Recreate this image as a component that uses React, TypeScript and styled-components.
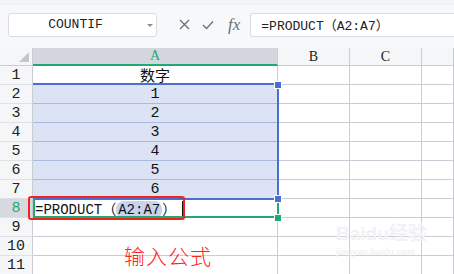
import { Fragment } from 'react';
import styled, { createGlobalStyle } from 'styled-components';

const GlobalStyle = createGlobalStyle`
  * { box-sizing: border-box; }
  body {
    margin: 0;
    background: #ffffff;
    font-family: "Liberation Mono", "Noto Sans CJK SC", monospace;
  }
`;

const GRID = '#c9cdd6';
const BLUE = '#4a6fd1';
const GREEN = '#1faa74';

const Page = styled.div`
  position: relative;
  width: 454px;
  height: 274px;
  overflow: hidden;
  background: #ffffff;
`;

const TopStrip = styled.div`
  height: 5px;
  background: #f3f4f6;
  border-bottom: 1px solid #eceef1;
`;

const Toolbar = styled.div`
  height: 43px;
  display: flex;
  align-items: center;
  padding: 0 0 4px 8px;
  background: #f7f8f9;
`;

const NameBox = styled.div`
  position: relative;
  width: 149px;
  height: 24px;
  display: flex;
  align-items: center;
  justify-content: center;
  padding-right: 14px;
  background: #ffffff;
  border: 1px solid #dadce1;
  border-radius: 3px;
  font-size: 13px;
  color: #222;
`;

const Caret = styled.span`
  position: absolute;
  right: 3px;
  top: 10px;
  border-left: 3px solid transparent;
  border-right: 3px solid transparent;
  border-top: 3px solid #8a8d93;
`;

const ToolIcons = styled.div`
  display: flex;
  align-items: center;
  gap: 12px;
  margin-left: 22px;
  color: #6b6e75;
`;

const Fx = styled.span`
  font-family: "Liberation Serif", serif;
  font-style: italic;
  font-size: 17px;
  color: #6b6e75;
  margin-left: 2px;
`;

const FormulaBox = styled.div`
  flex: 1;
  height: 24px;
  margin-left: 10px;
  display: flex;
  align-items: center;
  padding-left: 10px;
  background: #ffffff;
  border: 1px solid #dadce1;
  border-right: none;
  border-radius: 3px 0 0 3px;
  font-size: 13px;
  color: #222;
  white-space: nowrap;
`;

const Sheet = styled.div`
  position: relative;
  display: grid;
  grid-template-columns: 33px 245px 72px 72px 32px;
  grid-template-rows: 18px repeat(11, 19px);
`;

const Corner = styled.div`
  position: relative;
  background: #f5f6f8;
  border-right: 1px solid ${GRID};
  border-bottom: 1px solid ${GRID};
  &:after {
    content: '';
    position: absolute;
    right: 3px;
    bottom: 3px;
    border-left: 10px solid transparent;
    border-bottom: 10px solid #c3c6cc;
  }
`;

const ColHead = styled.div<{ $active?: boolean }>`
  display: flex;
  justify-content: center;
  align-items: center;
  background: ${({ $active }) => ($active ? '#d3d6dd' : '#f5f6f8')};
  color: ${({ $active }) => ($active ? GREEN : '#222')};
  border-right: 1px solid ${GRID};
  border-bottom: ${({ $active }) => ($active ? `2px solid ${GREEN}` : `1px solid ${GRID}`)};
  font-size: 14px;
  font-family: "Liberation Serif", serif;
`;

const RowHead = styled.div<{ $active?: boolean }>`
  display: flex;
  justify-content: center;
  align-items: center;
  background: ${({ $active }) => ($active ? '#d6d9df' : '#f5f6f8')};
  color: ${({ $active }) => ($active ? GREEN : '#222')};
  border-right: 1px solid ${GRID};
  border-bottom: 1px solid #dfe1e6;
  font-size: 15px;
`;

const Cell = styled.div<{ $sel?: boolean; $left?: boolean }>`
  display: flex;
  align-items: center;
  justify-content: ${({ $left }) => ($left ? 'flex-start' : 'center')};
  padding-left: ${({ $left }) => ($left ? '2px' : '0')};
  background: ${({ $sel }) => ($sel ? '#dce3f5' : '#ffffff')};
  border-right: 1px solid ${GRID};
  border-bottom: 1px solid ${({ $sel }) => ($sel ? '#a9b9e0' : GRID)};
  font-size: 15px;
  color: #111;
  white-space: nowrap;
  overflow: visible;
`;

const FormulaText = styled.span`
  font-size: 14px;
`;

const Ref = styled.span`
  background: #c9d3ee;
  border-radius: 8px;
  padding: 1px 2px;
`;

const Cursor = styled.span`
  display: inline-block;
  width: 1px;
  height: 15px;
  background: #111;
  margin-left: 6px;
  vertical-align: middle;
`;

const SelectionFrame = styled.div`
  position: absolute;
  left: 33px;
  width: 246px;
  height: 117px;
  border-top: 2px solid ${BLUE};
  border-right: 2px solid ${BLUE};
  border-bottom: 2px solid ${BLUE};
  pointer-events: none;
`;

const ActiveFrame = styled.div`
  position: absolute;
  left: 33px;
  width: 246px;
  height: 19px;
  border-left: 2px solid ${GREEN};
  border-right: 2px solid ${GREEN};
  border-bottom: 2px solid ${GREEN};
  pointer-events: none;
`;

const Handle = styled.div<{ $color: string }>`
  position: absolute;
  width: 6px;
  height: 6px;
  background: ${({ $color }) => $color};
  outline: 1px solid #ffffff;
  pointer-events: none;
`;

const RedBox = styled.div`
  position: absolute;
  left: 28px;
  top: 196px;
  width: 157px;
  height: 24px;
  border: 2.5px solid #f2231f;
  border-radius: 3px;
  pointer-events: none;
`;

const Note = styled.div`
  position: absolute;
  left: 124px;
  top: 240px;
  font-family: "Noto Sans CJK SC", sans-serif;
  font-weight: 300;
  font-size: 21px;
  letter-spacing: 1px;
  color: #ff2424;
`;

const Watermark = styled.div`
  position: absolute;
  left: 336px;
  top: 224px;
  color: #f1f2f4;
  font-family: "Liberation Sans", "Noto Sans CJK SC", sans-serif;
  pointer-events: none;
  line-height: 1;
`;

const MarkTitle = styled.div`
  font-size: 19px;
  font-weight: bold;
`;

const MarkUrl = styled.div`
  font-size: 9px;
  font-weight: bold;
  margin-top: 5px;
`;

const values = ['数字', '1', '2', '3', '4', '5', '6'];

export default function App() {
  const rows = Array.from({ length: 11 }, (_, i) => i + 1);
  return (
    <Page>
      <GlobalStyle />
      <TopStrip />
      <Toolbar>
        <NameBox>
          COUNTIF
          <Caret />
        </NameBox>
        <ToolIcons>
          <svg width="11" height="11" viewBox="0 0 11 11">
            <path d="M1 1 L10 10 M10 1 L1 10" stroke="#6b6e75" strokeWidth="1.3" fill="none" />
          </svg>
          <svg width="12" height="10" viewBox="0 0 12 10">
            <path d="M1 5 L4.5 8.5 L11 1.5" stroke="#6b6e75" strokeWidth="1.3" fill="none" />
          </svg>
          <Fx>fx</Fx>
        </ToolIcons>
        <FormulaBox>=PRODUCT（A2:A7）</FormulaBox>
      </Toolbar>
      <Sheet>
        <Corner />
        <ColHead $active>A</ColHead>
        <ColHead>B</ColHead>
        <ColHead>C</ColHead>
        <ColHead />
        {rows.map((r) => (
          <Fragment key={r}>
            <RowHead $active={r === 8}>{r}</RowHead>
            {r === 8 ? (
              <Cell $left>
                <FormulaText>
                  =PRODUCT（<Ref>A2:A7</Ref>）
                </FormulaText>
                <Cursor />
              </Cell>
            ) : (
              <Cell $sel={r >= 2 && r <= 7}>{values[r - 1] ?? ''}</Cell>
            )}
            <Cell />
            <Cell />
            <Cell />
          </Fragment>
        ))}
        <SelectionFrame style={{ top: 18 + 19 - 2 }} />
        <ActiveFrame style={{ top: 18 + 19 * 7 }} />
        <Handle $color={BLUE} style={{ left: 275, top: 18 + 19 - 3 }} />
        <Handle $color={BLUE} style={{ left: 275, top: 18 + 19 * 7 - 3 }} />
        <Handle $color={GREEN} style={{ left: 275, top: 18 + 19 * 8 - 3 }} />
      </Sheet>
      <RedBox />
      <Note>输入公式</Note>
      <Watermark>
        <MarkTitle>Baidu经验</MarkTitle>
        <MarkUrl>jingyan.baidu.com</MarkUrl>
      </Watermark>
    </Page>
  );
}
